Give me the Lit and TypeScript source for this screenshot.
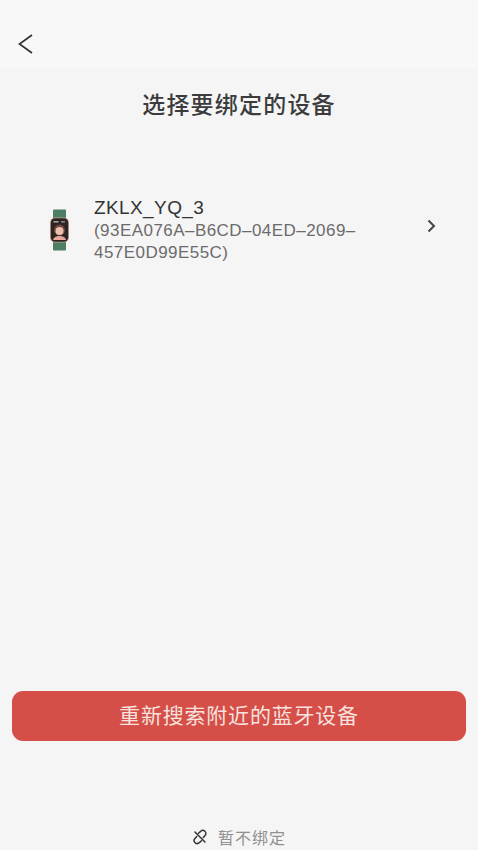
import { LitElement, html, css } from "lit";
import { customElement } from "lit/decorators.js";

@customElement("app-root")
export class AppRoot extends LitElement {
  static styles = css`
    :host {
      display: block;
      width: 478px;
      height: 850px;
      background: #f5f5f6;
      font-family: "Liberation Sans", "Noto Sans CJK SC", sans-serif;
      overflow: hidden;
    }
    .page { display: flex; flex-direction: column; height: 850px; padding-bottom: 1px; box-sizing: border-box; }
    .nav {
      height: 68px;
      flex: none;
      background: #f8f8f8;
      display: flex;
      align-items: flex-end;
      padding: 0 0 13px 18px;
      box-sizing: border-box;
    }
    .back { width: 15px; height: 22px; display: block; }
    .title {
      margin: 20px 0 0;
      height: 34px;
      line-height: 34px;
      text-align: center;
      font-size: 23px;
      letter-spacing: 1.2px;
      font-weight: 500;
      color: #3c3c3c;
    }
    .device {
      margin-top: 73px;
      display: flex;
      align-items: center;
      padding: 0 40px 0 47px;
    }
    .watch { width: 26px; height: 42px; flex: none; display: block; }
    .info { margin-left: 21px; width: 290px; flex: none; }
    .name { font-size: 19px; line-height: 25px; letter-spacing: 0.4px; color: #333; }
    .uuid { font-size: 17px; line-height: 22px; letter-spacing: 0.45px; color: #6b6b6b; }
    .chev { margin: 0 0 8px 43px; width: 9px; height: 14px; display: block; }
    .spacer { flex: 1; }
    .btn {
      margin: 0 12px;
      height: 50px;
      padding-bottom: 4px;
      box-sizing: border-box;
      border-radius: 11px;
      background: #d54e48;
      color: #f6e2de;
      font-size: 21px;
      letter-spacing: 0.8px;
      display: flex;
      align-items: center;
      justify-content: center;
    }
    .skip {
      margin-top: 84px;
      height: 24px;
      display: flex;
      align-items: center;
      justify-content: center;
      gap: 10px;
      color: #909090;
      font-size: 16px;
      letter-spacing: 1px;
    }
    .link { width: 16px; height: 16px; display: block; }
  `;

  render() {
    return html`
      <div class="page">
        <div class="nav">
          <svg class="back" viewBox="0 0 15 22" fill="none" stroke="#333" stroke-width="1.7">
            <path d="M14 2 L1.5 11 L14 20" />
          </svg>
        </div>
        <h1 class="title">选择要绑定的设备</h1>
        <div class="device">
          <svg class="watch" viewBox="0 0 26 42">
            <rect x="6" y="0.5" width="13" height="11" rx="1" fill="#4f7f63" />
            <rect x="6" y="31" width="13" height="10.5" rx="1" fill="#4f7f63" />
            <rect x="3" y="8.5" width="19" height="25" rx="5" fill="#c9a48e" />
            <rect x="3.8" y="9.3" width="17.4" height="23.4" rx="4.4" fill="#2b2625" />
            <rect x="6.5" y="12" width="5" height="1.6" fill="#a8a09a" />
            <rect x="14" y="12" width="4" height="1.6" fill="#8a827e" />
            <circle cx="12.5" cy="21" r="5.5" fill="#6f4a3c" />
            <circle cx="12.5" cy="22" r="4" fill="#edbfae" />
            <path d="M6 31 C7 25.5 18 25.5 19 31 Z" fill="#e8a99a" />
          </svg>
          <div class="info">
            <div class="name">ZKLX_YQ_3</div>
            <div class="uuid">(93EA076A–B6CD–04ED–2069–<br />457E0D99E55C)</div>
          </div>
          <svg class="chev" viewBox="0 0 9 14" fill="none" stroke="#444" stroke-width="2">
            <path d="M1.5 1.5 L7 7 L1.5 12.5" />
          </svg>
        </div>
        <div class="spacer"></div>
        <div class="btn">重新搜索附近的蓝牙设备</div>
        <div class="skip">
          <svg class="link" viewBox="0 0 16 16" fill="none" stroke="#333" stroke-width="1.5" stroke-linecap="round">
            <path d="M6.5 4.2 L8.6 2.4 a3 3 0 0 1 4.4 4.2 L11.3 8.4" />
            <path d="M9.5 11.8 L7.4 13.6 a3 3 0 0 1 -4.4 -4.2 L4.7 7.6" />
            <path d="M3 3 L13 13" />
          </svg>
          <span>暂不绑定</span>
        </div>
      </div>
    `;
  }
}
